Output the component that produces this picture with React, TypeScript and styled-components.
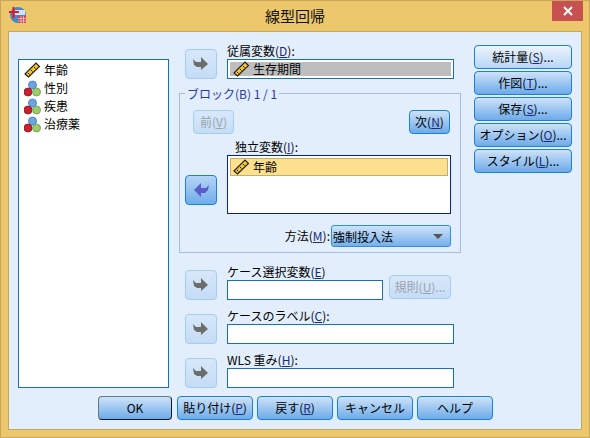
import React from "react";
import styled, { createGlobalStyle } from "styled-components";

const GlobalStyle = createGlobalStyle`
  html, body {
    margin: 0;
    padding: 0;
    width: 590px;
    height: 438px;
    overflow: hidden;
  }
  body {
    font-family: "Noto Sans CJK JP", "Liberation Sans", sans-serif;
    font-size: 12px;
    color: #000;
  }
`;

const Frame = styled.div`
  box-sizing: border-box;
  width: 590px;
  height: 438px;
  background: #edc76b;
  border: 1px solid #c9a75a;
  display: flex;
  flex-direction: column;
`;

const TitleBar = styled.div`
  height: 30px;
  display: flex;
  align-items: flex-start;
  position: relative;
  flex: none;
`;

const AppIcon = styled.svg`
  width: 18px;
  height: 18px;
  margin: 5px 0 0 8px;
`;

const Title = styled.div`
  position: absolute;
  left: 0;
  right: 0;
  top: 4px;
  text-align: center;
  font-size: 15px;
  line-height: 22px;
  color: #111;
`;

const CloseButton = styled.div`
  position: absolute;
  right: 6px;
  top: 0;
  width: 31px;
  height: 20px;
  background: #c75050;
  color: #fff;
  display: flex;
  align-items: center;
  justify-content: center;
`;

const Client = styled.div`
  box-sizing: border-box;
  margin: 0 7px;
  width: 574px;
  height: 399px;
  background: #e2eefb;
  border: 1px solid #c9a75a;
  padding: 0 9px;
  display: flex;
  flex-direction: column;
`;

const Main = styled.div`
  display: flex;
  height: 363px;
  flex: none;
`;

const SourceList = styled.div`
  box-sizing: border-box;
  width: 151px;
  height: 329px;
  margin-top: 27px;
  background: #fff;
  border: 1px solid #1470c4;
  padding: 1px 3px;
  flex: none;
`;

const ListItem = styled.div`
  display: flex;
  align-items: center;
  gap: 3px;
  height: 18px;
  font-size: 12px;
  line-height: 18px;
  padding-left: 2px;
`;

const Middle = styled.div`
  width: 282px;
  margin-left: 10px;
  padding-top: 12px;
  flex: none;
`;

const VarRow = styled.div<{ $top?: number }>`
  display: flex;
  align-items: flex-end;
  gap: 10px;
  padding-left: 6px;
  margin-top: ${(p) => p.$top ?? 9}px;
`;

const FieldColumn = styled.div`
  display: flex;
  flex-direction: column;
  flex: 1;
  min-width: 0;
`;

const Label = styled.div<{ $indent?: number }>`
  height: 15px;
  padding-left: ${(p) => p.$indent ?? 0}px;
  font-size: 12px;
  line-height: 14px;
  color: #000;
  white-space: nowrap;
  u {
    color: #1a2a78;
  }
`;

const DependentField = styled.div`
  box-sizing: border-box;
  width: 227px;
  height: 20px;
  border: 1px solid #1470c4;
  background: #fff;
  padding: 2px;
`;

const DependentInner = styled.div`
  height: 100%;
  background: #bdbdbd;
  display: flex;
  align-items: center;
  gap: 3px;
  padding-left: 3px;
  font-size: 12px;
  line-height: 18px;
`;

const TextField = styled.div<{ $width: number }>`
  box-sizing: border-box;
  width: ${(p) => p.$width}px;
  height: 20px;
  background: #fff;
  border: 1px solid #1470c4;
`;

const InlineFields = styled.div`
  display: flex;
  align-items: flex-end;
  gap: 6px;
  height: 20px;
`;

const Group = styled.div`
  box-sizing: border-box;
  position: relative;
  height: 160px;
  margin-top: 14px;
  border: 1px solid #a3bfdd;
  padding: 16px 9px 0 5px;
`;

const Legend = styled.div`
  position: absolute;
  top: -7px;
  left: 5px;
  padding: 0 2px;
  background: #e2eefb;
  color: #2c3b9c;
  font-size: 12px;
  line-height: 14px;
`;

const BlockNav = styled.div`
  display: flex;
  justify-content: space-between;
  padding: 0 1px 0 8px;
`;

const IndependentRow = styled.div`
  display: flex;
  gap: 10px;
  margin-top: 6px;
`;

const IndependentList = styled.div`
  box-sizing: border-box;
  width: 224px;
  height: 59px;
  background: #fff;
  border: 1px solid #0a1f9a;
  padding: 2px;
`;

const SelectedItem = styled.div`
  box-sizing: border-box;
  height: 18px;
  background: #fde08e;
  border: 1px solid #c3ad6c;
  display: flex;
  align-items: center;
  gap: 3px;
  padding: 0 0 1px 2px;
  font-size: 12px;
`;

const MethodRow = styled.div`
  display: flex;
  justify-content: flex-end;
  align-items: center;
  gap: 1px;
  margin-top: 11px;
`;

const Combo = styled.div`
  box-sizing: border-box;
  width: 120px;
  height: 22px;
  border: 1px solid #2f8ee0;
  border-radius: 3px;
  background: linear-gradient(#cfe3f8, #74b0ec);
  display: flex;
  align-items: center;
  justify-content: space-between;
  padding: 0 7px 0 1px;
  font-size: 12px;
`;

const ComboCaret = styled.div`
  width: 0;
  height: 0;
  border-left: 5px solid transparent;
  border-right: 5px solid transparent;
  border-top: 5px solid #555;
`;

const Button = styled.div<{ $width?: number; $disabled?: boolean; $light?: boolean }>`
  box-sizing: border-box;
  width: ${(p) => (p.$width ? `${p.$width}px` : "auto")};
  height: 24px;
  flex: none;
  display: flex;
  align-items: center;
  justify-content: center;
  white-space: nowrap;
  font-size: 12px;
  line-height: 14px;
  border-radius: 4px;
  border: 1px solid ${(p) => (p.$disabled ? "#a4cdf2" : "#1a80d8")};
  color: ${(p) => (p.$disabled ? "#9aa3ad" : "#000")};
  background: ${(p) =>
    p.$disabled
      ? "linear-gradient(#d8e8f9, #c6ddf6)"
      : p.$light
        ? "linear-gradient(#ecf4fd, #b8d6f5)"
        : "linear-gradient(#cde2f8, #6dabea)"};
  u {
    color: ${(p) => (p.$disabled ? "#9aa3ad" : "#1a2a78")};
  }
`;

const RuleButton = styled(Button)`
  margin-bottom: 1px;
`;

const ArrowButton = styled.div<{ $active?: boolean }>`
  box-sizing: border-box;
  width: 32px;
  height: 30px;
  flex: none;
  border-radius: 4px;
  display: flex;
  align-items: center;
  justify-content: center;
  border: 1px solid ${(p) => (p.$active ? "#1a80d8" : "#a4cdf2")};
  background: ${(p) =>
    p.$active ? "linear-gradient(#b5d4f5, #70adea)" : "linear-gradient(#d8e8f9, #c4dcf6)"};
`;

const BackArrowButton = styled(ArrowButton)`
  margin-top: 35px;
`;

const SideColumn = styled.div`
  display: flex;
  flex-direction: column;
  gap: 2px;
  width: 98px;
  margin: 13px 0 0 13px;
  flex: none;
`;

const Footer = styled.div`
  display: flex;
  gap: 4px;
  padding-left: 80px;
  margin-top: 1px;
`;

const OkButton = styled(Button)`
  margin-right: 1px;
  border-color: #66778c #161a20 #161a20 #66778c;
`;

const RulerIcon = () => (
  <svg width="17" height="16" viewBox="0 0 17 16" style={{ flex: "none" }}>
    <path d="M1 12 L12 1 L15.5 4.5 L4.5 15 Z" fill="#f4c62c" stroke="#1c1c1c" strokeWidth="1.1" />
    <path d="M4 11 L5.5 12.5 M7 8 L8.5 9.5 M10 5 L11.5 6.5" stroke="#1c1c1c" strokeWidth="1" />
  </svg>
);

const NominalIcon = () => (
  <svg width="17" height="17" viewBox="0 0 17 17" style={{ flex: "none" }}>
    <circle cx="8.5" cy="5" r="4" fill="#6aa5e4" stroke="#3f77b5" strokeWidth="0.8" />
    <circle cx="4" cy="12" r="4" fill="#c8202f" stroke="#8c1420" strokeWidth="0.8" />
    <circle cx="12.5" cy="12" r="4" fill="#9ccb6c" stroke="#6a9a44" strokeWidth="0.8" />
  </svg>
);

const MoveRight = ({ color }: { color: string }) => (
  <svg width="16" height="14" viewBox="0 0 16 14">
    <path d="M0 2 L3 5 L8 5 L8 0 L15 7 L8 13 L8 10 L4 10 L1 8 Z" fill={color} />
  </svg>
);

const MoveLeft = ({ color }: { color: string }) => (
  <svg width="16" height="14" viewBox="0 0 16 14">
    <path d="M16 2 L13 5 L8 5 L8 0 L1 7 L8 14 L8 10 L12 10 L15 7 Z" fill={color} />
  </svg>
);

const variables = [
  { name: "年齢", scale: true },
  { name: "性別", scale: false },
  { name: "疾患", scale: false },
  { name: "治療薬", scale: false },
];

export default function App() {
  return (
    <>
      <GlobalStyle />
      <Frame>
        <TitleBar>
          <AppIcon viewBox="0 0 18 18">
            <circle cx="9" cy="9" r="8" fill="#4a86c4" />
            <path d="M6 9 H16 V4 H6 Z" fill="#cfe2f5" />
            <rect x="9" y="10" width="8" height="7" fill="#c8475a" />
            <path d="M9 12.5 H17 M9 15 H17 M12 10 V17 M14.5 10 V17" stroke="#f3d5d9" strokeWidth="0.7" />
            <path d="M0 6 H10 M4.5 1 V12" stroke="#dc1c2c" strokeWidth="2" />
          </AppIcon>
          <Title>線型回帰</Title>
          <CloseButton>
            <svg width="10" height="10" viewBox="0 0 10 10">
              <path d="M1 1 L9 9 M9 1 L1 9" stroke="#fff" strokeWidth="2" />
            </svg>
          </CloseButton>
        </TitleBar>
        <Client>
          <Main>
            <SourceList>
              {variables.map((v) => (
                <ListItem key={v.name}>
                  {v.scale ? <RulerIcon /> : <NominalIcon />}
                  {v.name}
                </ListItem>
              ))}
            </SourceList>
            <Middle>
              <VarRow $top={0}>
                <ArrowButton>
                  <MoveRight color="#6d6d6d" />
                </ArrowButton>
                <FieldColumn>
                  <Label>
                    従属変数(<u>D</u>):
                  </Label>
                  <DependentField>
                    <DependentInner>
                      <RulerIcon />
                      生存期間
                    </DependentInner>
                  </DependentField>
                </FieldColumn>
              </VarRow>
              <Group>
                <Legend>ブロック(B) 1 / 1</Legend>
                <BlockNav>
                  <Button $width={41} $disabled>
                    前(<u>V</u>)
                  </Button>
                  <Button $width={41}>
                    次(<u>N</u>)
                  </Button>
                </BlockNav>
                <IndependentRow>
                  <BackArrowButton $active>
                    <MoveLeft color="#5a5ac8" />
                  </BackArrowButton>
                  <FieldColumn>
                    <Label $indent={8}>
                      独立変数(<u>I</u>):
                    </Label>
                    <IndependentList>
                      <SelectedItem>
                        <RulerIcon />
                        年齢
                      </SelectedItem>
                    </IndependentList>
                  </FieldColumn>
                </IndependentRow>
                <MethodRow>
                  <Label>
                    方法(<u>M</u>):
                  </Label>
                  <Combo>
                    強制投入法
                    <ComboCaret />
                  </Combo>
                </MethodRow>
              </Group>
              <VarRow $top={12}>
                <ArrowButton>
                  <MoveRight color="#6d6d6d" />
                </ArrowButton>
                <FieldColumn>
                  <Label>
                    ケース選択変数(<u>E</u>)
                  </Label>
                  <InlineFields>
                    <TextField $width={156} />
                    <RuleButton $width={62} $disabled>
                      規則(<u>U</u>)...
                    </RuleButton>
                  </InlineFields>
                </FieldColumn>
              </VarRow>
              <VarRow>
                <ArrowButton>
                  <MoveRight color="#6d6d6d" />
                </ArrowButton>
                <FieldColumn>
                  <Label>
                    ケースのラベル(<u>C</u>):
                  </Label>
                  <TextField $width={227} />
                </FieldColumn>
              </VarRow>
              <VarRow>
                <ArrowButton>
                  <MoveRight color="#6d6d6d" />
                </ArrowButton>
                <FieldColumn>
                  <Label>
                    WLS 重み(<u>H</u>):
                  </Label>
                  <TextField $width={227} />
                </FieldColumn>
              </VarRow>
            </Middle>
            <SideColumn>
              <Button $light>
                統計量(<u>S</u>)...
              </Button>
              <Button>
                作図(<u>T</u>)...
              </Button>
              <Button>
                保存(<u>S</u>)...
              </Button>
              <Button>
                オプション(<u>O</u>)...
              </Button>
              <Button>
                スタイル(<u>L</u>)...
              </Button>
            </SideColumn>
          </Main>
          <Footer>
            <OkButton $width={74}>OK</OkButton>
            <Button $width={76}>
              貼り付け(<u>P</u>)
            </Button>
            <Button $width={76}>
              戻す(<u>R</u>)
            </Button>
            <Button $width={76}>キャンセル</Button>
            <Button $width={76}>ヘルプ</Button>
          </Footer>
        </Client>
      </Frame>
    </>
  );
}
